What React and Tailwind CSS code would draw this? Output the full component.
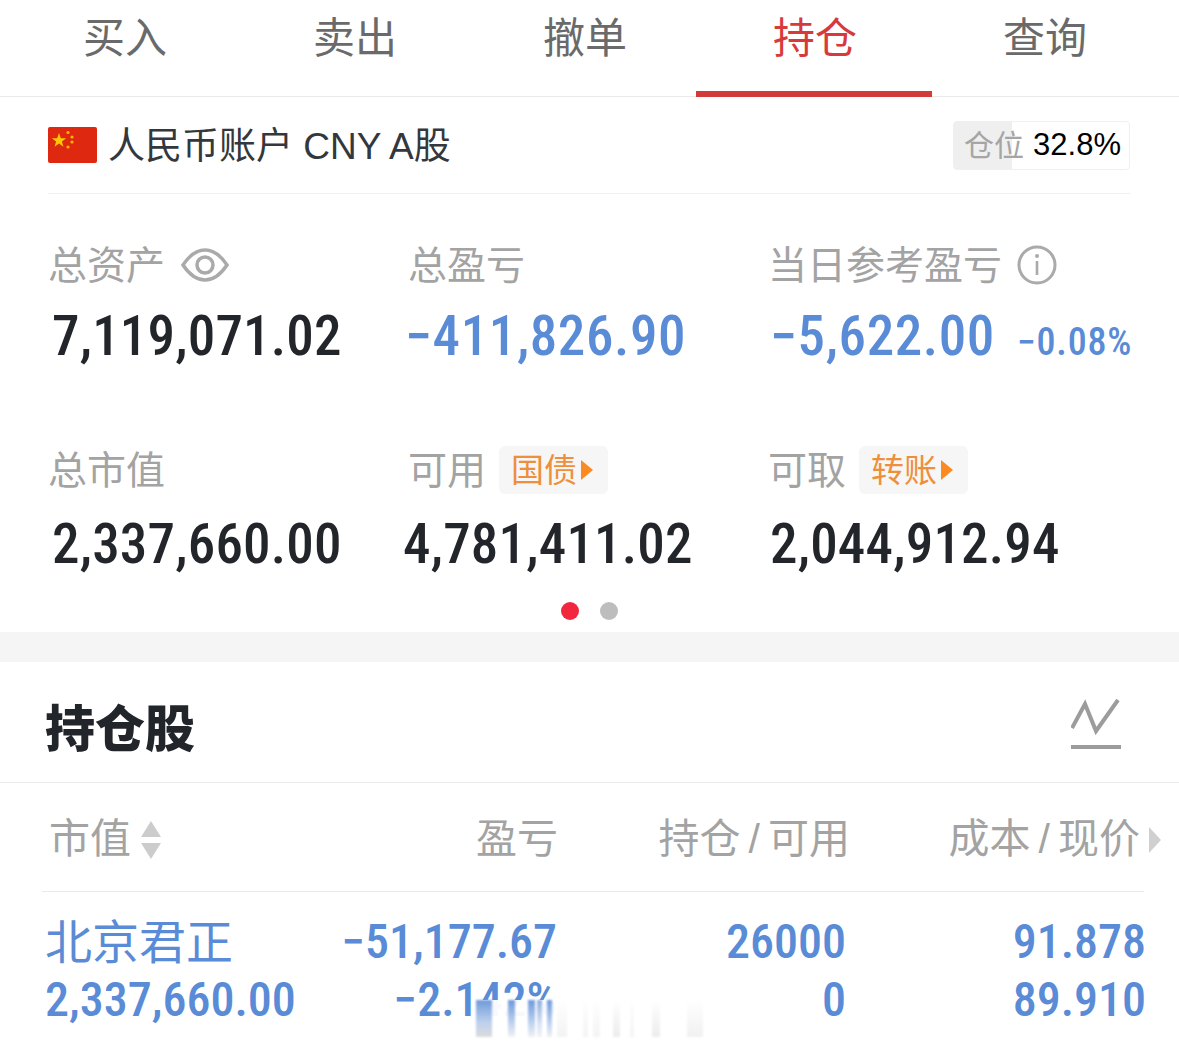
const cjk = "font-['Liberation_Sans','Noto_Sans_CJK_SC',sans-serif]"
const num = "font-['Roboto','Noto_Sans_CJK_SC',sans-serif] font-medium font-stretch-condensed"

const tabs = ['买入', '卖出', '撤单', '持仓', '查询']

const Flag = () => (
  <svg width="49" height="36" viewBox="0 0 49 36">
    <rect width="49" height="36" rx="2" fill="#de2910" />
    <polygon points="11,6 12.8,11.2 18.2,11.2 13.9,14.5 15.4,19.7 11,16.6 6.6,19.7 8.1,14.5 3.8,11.2 9.2,11.2" fill="#ffc800" />
    <circle cx="20" cy="5.5" r="1.6" fill="#ffb400" />
    <circle cx="24" cy="10" r="1.6" fill="#ffb400" />
    <circle cx="24" cy="15" r="1.6" fill="#ffb400" />
    <circle cx="20" cy="20" r="1.6" fill="#ffb400" />
  </svg>
)

const Eye = () => (
  <svg width="48" height="36" viewBox="0 0 48 36" fill="none" stroke="#aaaaaa" strokeWidth="3.5">
    <path d="M2 18 C10 6 17 3 24 3 C31 3 38 6 46 18 C38 30 31 33 24 33 C17 33 10 30 2 18 Z" />
    <circle cx="24" cy="18" r="8" />
  </svg>
)

const Info = () => (
  <svg width="40" height="40" viewBox="0 0 40 40" fill="none">
    <circle cx="20" cy="20" r="18" stroke="#aaaaaa" strokeWidth="3" />
    <circle cx="20" cy="11" r="2" fill="#aaaaaa" />
    <rect x="18.7" y="16" width="2.6" height="14" fill="#aaaaaa" />
  </svg>
)

const Chip = ({ text }) => (
  <span className="flex items-center h-[48px] w-[109px] pl-[12px] rounded-md bg-[#f6f6f6] text-[33px] text-[#ee8f3c]">
    {text}
    <svg width="14" height="22" viewBox="0 0 14 22" className="ml-[3px]">
      <polygon points="1,1 13,11 1,21" fill="#fb8a22" />
    </svg>
  </span>
)

const Label = ({ children, gap = 'gap-[16px]' }) => (
  <div className={`flex items-center h-[50px] ${gap} text-[39px] leading-none text-[#a3a3a3]`}>{children}</div>
)

const Value = ({ children, className = '' }) => (
  <div className={`${num} text-[55px] leading-none h-[60px] flex items-center tracking-[0.2px] ${className}`}>{children}</div>
)

const Blue = 'text-[#5a8bd6]'
const Dark = 'text-[#22252a]'

const Row = ({ a, b, c, d, first }) => (
  <div className={`flex items-center h-[58px] ${num} ${Blue} text-[48px] leading-none`}>
    <div className={`w-[295px] ${first ? `${cjk} font-normal! text-[47px]` : ''}`}>{a}</div>
    <div className="w-[217px] text-right">{b}</div>
    <div className="w-[289px] text-right">{c}</div>
    <div className="w-[300px] text-right">{d}</div>
  </div>
)

const Slash = () => <span className="mx-[8px] font-light text-[#a3a3a3]">/</span>

// 底部水印的竖条
const smears = [
  { w: 'w-[16px] ml-0', bg: 'bg-[linear-gradient(#6f9adb,#bcd0ee_60%,#dcdcdc)]' },
  { w: 'w-[7px] ml-[16px]', bg: 'bg-[linear-gradient(#6f9adb,#c9d9f1_70%,#f2f2f2)]' },
  { w: 'w-[7px] ml-[13px]', bg: 'bg-[linear-gradient(#6f9adb,#c9d9f1_70%,#f2f2f2)]' },
  { w: 'w-[5px] ml-[2px]', bg: 'bg-[linear-gradient(#8fb0e2,#dde7f6_70%,#f2f2f2)]' },
  { w: 'w-[5px] ml-[5px]', bg: 'bg-[linear-gradient(#6f9adb,#c9d9f1_70%,#f0f0f0)]' },
  { w: 'w-[10px] ml-[5px]', bg: 'bg-[linear-gradient(#ffffff,#f3f3f3)]' },
  { w: 'w-[5px] ml-[16px]', bg: 'bg-[linear-gradient(#ffffff,#f4f4f4)]' },
  { w: 'w-[7px] ml-[5px]', bg: 'bg-[linear-gradient(#ffffff,#f4f4f4)]' },
  { w: 'w-[7px] ml-[13px]', bg: 'bg-[linear-gradient(#ffffff,#ececec)]' },
  { w: 'w-[4px] ml-[10px]', bg: 'bg-[linear-gradient(#ffffff,#f5f5f5)]' },
  { w: 'w-[8px] ml-[18px]', bg: 'bg-[linear-gradient(#ffffff,#ececec)]' },
  { w: 'w-[16px] ml-[27px]', bg: 'bg-[linear-gradient(#ffffff,#f1f1f1)]' },
]

export default function App() {
  return (
    <div className={`${cjk} relative w-[1179px] h-[1049px] overflow-hidden bg-white`}>
      <div className="flex h-[97px] pl-[10px] border-b border-[#e9e9e9]">
        {tabs.map((t, i) => (
          <div
            key={t}
            className={`relative w-[230px] pb-[19px] flex items-center justify-center text-[42px] ${i === 3 ? 'text-[#d73a3a]' : 'text-[#6a6a6a]'}`}
          >
            {t}
            {i === 3 && <span className="absolute -left-[4px] -right-[2px] -bottom-[1px] h-[6px] bg-[#d33a3a]" />}
          </div>
        ))}
      </div>

      <div className="mx-[48px] w-[1082px] flex items-center justify-between h-[97px] border-b border-[#efefef]">
        <div className="flex items-center gap-[11px] text-[37px] text-[#34373b]">
          <Flag />
          <span className="mt-[3px]">人民币账户 CNY A股</span>
        </div>
        <div className="relative flex items-center justify-end pr-[8px] w-[177px] h-[49px] border border-[#f0f0f0] rounded-sm mb-[-1px]">
          <span className="absolute left-0 top-0 bottom-0 w-[58px] bg-[#efefef]" />
          <span className="relative text-[#a5a5a5] mr-[9px] text-[30px]">仓位</span>
          <span className="relative text-black text-[31px]">32.8%</span>
        </div>
      </div>

      <div className="pl-[48px] pt-[46px] h-[426px]">
        <div className="grid grid-cols-[360px_360px_360px]">
          <div>
            <Label>总资产<Eye /></Label>
            <Value className={`mt-[16px] ml-[4px] ${Dark}`}>7,119,071.02</Value>
          </div>
          <div>
            <Label>总盈亏</Label>
            <Value className={`mt-[16px] -ml-[3px] tracking-[0.6px] ${Blue}`}>−411,826.90</Value>
          </div>
          <div>
            <Label gap="gap-[15px]">当日参考盈亏<Info /></Label>
            <Value className={`mt-[16px] ml-[2px] tracking-[0.6px] ${Blue}`}>
              −5,622.00
              <span className="ml-[22px] text-[38px] mt-[12px] tracking-[0.8px]">−0.08%</span>
            </Value>
          </div>
        </div>
        <div className="grid grid-cols-[360px_360px_360px] mt-[79px]">
          <div>
            <Label>总市值</Label>
            <Value className={`mt-[19px] ml-[4px] ${Dark}`}>2,337,660.00</Value>
          </div>
          <div>
            <Label gap="gap-[13px]">可用<Chip text="国债" /></Label>
            <Value className={`mt-[19px] -ml-[5px] ${Dark}`}>4,781,411.02</Value>
          </div>
          <div>
            <Label gap="gap-[13px]">可取<Chip text="转账" /></Label>
            <Value className={`mt-[19px] ml-[2px] ${Dark}`}>2,044,912.94</Value>
          </div>
        </div>
      </div>

      <div className="flex justify-center gap-[21px] -mt-[18px] h-[18px]">
        <span className="w-[18px] h-[18px] rounded-full bg-[#f2263c]" />
        <span className="w-[18px] h-[18px] rounded-full bg-[#bdbdbd]" />
      </div>

      <div className="h-[30px] mt-[12px] bg-[#f5f5f5]" />

      <div className="flex items-center justify-between h-[121px] pt-[4px] pl-[45px] pr-[58px] border-b border-[#e9e9e9]">
        <span className="mt-[12px] text-[50px] font-black text-[#22252a]">持仓股</span>
        <svg width="50" height="52" viewBox="0 0 50 52" fill="none" stroke="#9c9c9c" strokeWidth="4">
          <path d="M1 30 L14 6 L25 33 L47 2" />
          <path d="M0 49 H50" />
        </svg>
      </div>

      <div className="ml-[42px] w-[1102px] h-[109px] pt-[5px] flex items-center text-[41px] leading-none text-[#a3a3a3] border-b border-[#e9e9e9]">
        <div className="flex items-center w-[310px] shrink-0 pl-[7px]">
          市值
          <svg width="22" height="40" viewBox="0 0 22 40" className="ml-[9px]">
            <polygon points="11,1 21,17 1,17" fill="#cccccc" />
            <polygon points="1,23 21,23 11,39" fill="#cccccc" />
          </svg>
        </div>
        <div className="w-[206px] shrink-0 text-right">盈亏</div>
        <div className="w-[292px] shrink-0 text-right">持仓<Slash />可用</div>
        <div className="w-[290px] shrink-0 text-right">成本<Slash />现价</div>
        <svg width="12" height="26" viewBox="0 0 12 26" className="ml-[9px] shrink-0">
          <polygon points="0,0 12,13 0,26" fill="#d0d0d0" />
        </svg>
      </div>

      <div className="pl-[45px] pt-[21px]">
        <Row first a="北京君正" b="−51,177.67" c="26000" d="91.878" />
        <Row a="2,337,660.00" b="−2.142%" c="0" d="89.910" />
      </div>

      <div className="absolute left-[476px] top-[1000px] w-[228px] h-[37px] flex items-stretch bg-white/95">
        {smears.map((s, i) => (
          <span key={i} className={`${s.w} ${s.bg} blur-[1px]`} />
        ))}
      </div>
    </div>
  )
}
